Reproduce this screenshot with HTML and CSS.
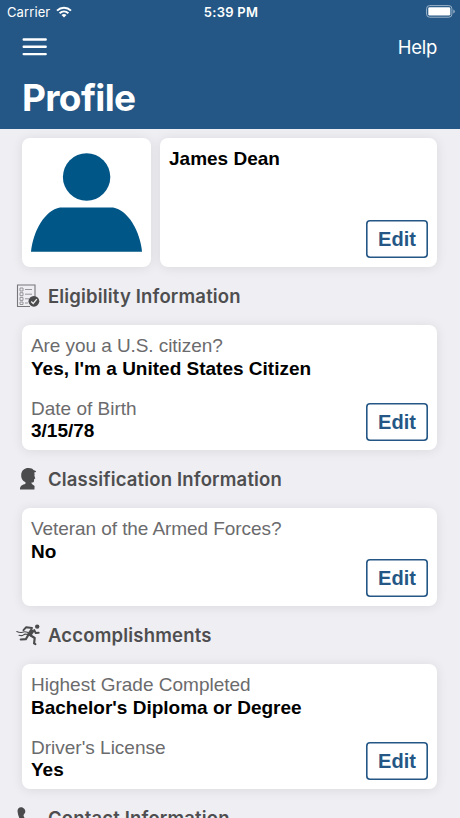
FILE: index.html
```html
<!DOCTYPE html>
<html lang="en">
<head>
<meta charset="utf-8">
<title>Profile</title>
<link rel="stylesheet" href="styles.css">
</head>
<body>
<header class="header">
  <div class="status">
    <div class="status-left"><span class="carrier">Carrier</span>
      <svg class="wifi" width="16" height="12" viewBox="0 0 16 12"><g fill="none" stroke="#fff" stroke-width="2"><path d="M1 4.600C5 .8 11 .8 15 4.600"/><path d="M3.600 7.300c2.600-2.400 6.200-2.400 8.800 0"/></g><path d="M8 11.500 5.500 9c1.500-1.300 3.500-1.300 5 0z" fill="#fff"/></svg>
    </div>
    <span class="time">5:39 PM</span>
    <svg class="battery" width="29" height="13" viewBox="0 0 29 13"><rect x=".6" y=".6" width="25.300" height="11.600" rx="3" fill="none" stroke="#9db4ca"/><rect x="2.300" y="2.200" width="22" height="8.400" rx="1.400" fill="#fff"/><path d="M27.300 4.500q1.500.4 1.500 2t-1.500 2z" fill="#9db4ca"/></svg>
  </div>
  <nav class="nav">
    <svg class="menu" width="25" height="18" viewBox="0 0 25 18"><path d="M1.700 1.500h22M1.700 8.800h22M1.700 16.100h22" stroke="#fff" stroke-width="2.400" stroke-linecap="round"/></svg>
    <a class="help">Help</a>
  </nav>
  <h1 class="title">Profile</h1>
</header>
<main class="content">
  <section class="identity">
    <div class="card avatar">
      <svg width="111" height="99" viewBox="0 0 111 99" fill="#005687"><circle cx="55.600" cy="24" r="23.700"/><path d="M0 98.700C2 78 14 57 29 54.500h53C97 57 109 78 111 98.700z"/></svg>
    </div>
    <div class="card name-card"><p class="value name">James Dean</p><button class="edit">Edit</button></div>
  </section>

  <h2 class="section-title">
    <svg class="icon" width="24" height="24" viewBox="0 0 24 24"><path d="M14 22.500H1.500V1H19v12" fill="none" stroke="#77777a" stroke-width="1.100"/><g fill="none" stroke="#8b8b8e" stroke-width=".9"><path d="M4 4h3v3H4zM4 8.700h3v3H4zM4 13.400h3v3H4zM4 18h3v2.500H4zM9 5.500h7M9 10.200h7M9 14.800h4M9 19h3"/></g><circle cx="17.900" cy="17.300" r="5.400" fill="#4b4b4d"/><path d="m15.200 17.500 2 2 3.600-4.300" fill="none" stroke="#eee" stroke-width="1.300"/></svg>
    <span>Eligibility Information</span>
  </h2>
  <section class="card info">
    <dl><dt class="tight">Are you a U.S. citizen?</dt><dd class="value">Yes, I'm a United States Citizen</dd></dl>
    <dl><dt>Date of Birth</dt><dd class="value">3/15/78</dd></dl>
    <button class="edit">Edit</button>
  </section>

  <h2 class="section-title">
    <svg class="icon" width="24" height="24" viewBox="0 0 24 24" fill="#4b4b4d"><path d="M4 22.600c0-3.300 1.300-4.500 4.500-5.300l1.100-.8-.1-1.300C6.400 13.800 4.800 11 5.200 7.500 5.700 3.300 8.700 1 12.600 1.100c2.500 0 3.800.8 4.800 1.800l2.400 1 .2 1.100-1.800.4c.5 1.200.5 2.300.2 3.300l.9 2.800-1.100.5-.3 2.600c-.3 1-1.300 1-2.600.9l.6 1.600 2.700 2-.2 3.500z"/></svg>
    <span>Classification Information</span>
  </h2>
  <section class="card info short">
    <dl><dt class="tight">Veteran of the Armed Forces?</dt><dd class="value">No</dd></dl>
    <button class="edit">Edit</button>
  </section>

  <h2 class="section-title wide">
    <svg class="icon" width="24" height="24" viewBox="0 0 24 24" fill="none" stroke="#4b4b4d" stroke-linejoin="round" stroke-linecap="round"><circle cx="21.200" cy="3.600" r="2.200" fill="#4b4b4d" stroke="none"/><path d="m16.800 6.700-3.800 5.500" stroke-width="4.600" stroke-linecap="butt"/><path d="m16 5-5.800-.8-2.700 3M18.200 7l1.500 3 3-.2" stroke-width="1.900"/><path d="m14 12 4.700 3-.6 5.400 1.300.7M12.300 12l-2.500 4.200-5 .3" stroke-width="2.200"/><path d="M.8 8.500q3.200 1.700 5.700.7t5.500.4M3 12.300q3 .9 4.500-.4t4-.3" stroke-width="1.100"/></svg>
    <span>Accomplishments</span>
  </h2>
  <section class="card info">
    <dl><dt>Highest Grade Completed</dt><dd class="value">Bachelor's Diploma or Degree</dd></dl>
    <dl><dt>Driver's License</dt><dd class="value">Yes</dd></dl>
    <button class="edit">Edit</button>
  </section>

  <h2 class="section-title">
    <svg class="icon" width="24" height="24" viewBox="0 0 24 24"><path d="M1.500 5C1.500 2.500 3 1.200 5 1.200S9.300 3 9.300 5.300 8 8 7.500 9.200c.5 3 3 6 6 7.300l4-1.500 4 4-2 4.500C10 24 2 14 1.500 5z" fill="#4b4b4d"/></svg>
    <span>Contact Information</span>
  </h2>
</main>
</body>
</html>
```
FILE: styles.css
```css
* { box-sizing: border-box; }
html, body { height: 100%; }
body {
  margin: 0;
  overflow: hidden;
  background: #eeeef3;
  font-family: "Liberation Sans", Arial, sans-serif;
  color: #000;
}
h1, h2, p, dl, dd { margin: 0; }

.header { height: 129px; background: #245785; color: #fff; font-family: Inter, sans-serif; }
.status {
  height: 24px;
  padding: 0 5px 0 7px;
  display: grid;
  grid-template-columns: 1fr auto 1fr;
  align-items: center;
  font-size: 13px;
}
.status-left { display: flex; align-items: center; gap: 6px; }
.carrier { letter-spacing: .1px; }
.wifi { margin-top: -1px; }
.time { font-weight: 600; letter-spacing: .25px; }
.battery { justify-self: end; margin-top: -1px; }
.nav { height: 46px; padding: 0 23px 0 22px; display: flex; align-items: center; justify-content: space-between; }
.help { font-size: 18.500px; letter-spacing: -.3px; }
.title { padding-left: 22px; font-size: 37px; line-height: 56px; font-weight: 700; letter-spacing: -.650px; }

.content { padding: 9px 23px 0 22px; }
.card { background: #fff; border-radius: 8px; box-shadow: 0 1px 12px rgba(0, 0, 0, .09); }
.identity { display: grid; grid-template-columns: 129px 1fr; gap: 9px; height: 129px; }
.avatar { display: flex; justify-content: center; padding-top: 15px; }
.name-card { display: flex; flex-direction: column; justify-content: space-between; padding: 10px 9px 9px; }

.section-title {
  height: 58px;
  margin-left: -6px;
  display: flex;
  align-items: center;
  gap: 8px;
  color: #4e4e50;
  font: 600 18.500px Inter, sans-serif;
  letter-spacing: .160px;
  white-space: nowrap;
}
.wide { letter-spacing: .180px; }
.icon { flex: none; }

.info {
  position: relative;
  height: 125px;
  padding: 10px 9px;
  display: flex;
  flex-direction: column;
  gap: 17.500px;
}
.short { height: 98px; }
dt, .value { font-size: 19px; line-height: 22.500px; white-space: nowrap; }
dt { color: #6b6b6d; }
.tight { letter-spacing: -.070px; }
.value { font-weight: 700; }
.edit {
  align-self: flex-end;
  width: 62px;
  height: 38px;
  padding: 1px 0 0;
  border: 0;
  border-radius: 4px;
  box-shadow: inset 0 0 0 1.600px #245785;
  background: #fff;
  color: #245785;
  font: 700 20px "Liberation Sans", Arial, sans-serif;
}
.info .edit { position: absolute; right: 9px; bottom: 9px; }
```
